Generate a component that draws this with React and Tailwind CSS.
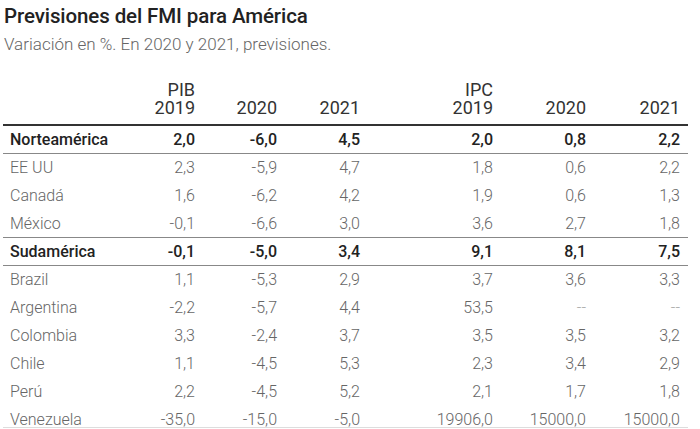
import React from "react";

const rows = [
  { name: "Norteamérica", v: ["2,0", "-6,0", "4,5", "2,0", "0,8", "2,2"], group: true },
  { name: "EE UU", v: ["2,3", "-5,9", "4,7", "1,8", "0,6", "2,2"] },
  { name: "Canadá", v: ["1,6", "-6,2", "4,2", "1,9", "0,6", "1,3"] },
  { name: "México", v: ["-0,1", "-6,6", "3,0", "3,6", "2,7", "1,8"], last: true },
  { name: "Sudamérica", v: ["-0,1", "-5,0", "3,4", "9,1", "8,1", "7,5"], group: true },
  { name: "Brazil", v: ["1,1", "-5,3", "2,9", "3,7", "3,6", "3,3"] },
  { name: "Argentina", v: ["-2,2", "-5,7", "4,4", "53,5", "--", "--"] },
  { name: "Colombia", v: ["3,3", "-2,4", "3,7", "3,5", "3,5", "3,2"] },
  { name: "Chile", v: ["1,1", "-4,5", "5,3", "2,3", "3,4", "2,9"] },
  { name: "Perú", v: ["2,2", "-4,5", "5,2", "2,1", "1,7", "1,8"] },
  { name: "Venezuela", v: ["-35,0", "-15,0", "-5,0", "19906,0", "15000,0", "15000,0"] },
];

const cols = "grid grid-cols-[117px_83px_82px_83px_133px_93px_94px]";

export default function App() {
  return (
    <div className="w-[700px] h-[429px] overflow-hidden bg-white font-['Roboto',sans-serif]">
      <div className="pl-[4px] pt-[2px]">
        <h1 className="text-[20.5px] leading-[28px] font-medium text-[#222] tracking-[-0.1px]">
          Previsiones del FMI para América
        </h1>
        <p className="text-[17px] leading-[22px] font-light text-[#666] mt-[3px]">
          Variación en %. En 2020 y 2021, previsiones.
        </p>
      </div>
      <div className="ml-[3px] w-[685px] mt-[26px] h-[347px] overflow-hidden border-b border-[#ddd]">
        <div className={`${cols} border-b-2 border-[#333] text-[18px] leading-[18px] text-[#333] pb-[7px]`}>
          <div />
          <div className="text-right pr-[8px]">PIB<br />2019</div>
          <div className="text-right pr-[8px] self-end">2020</div>
          <div className="text-right pr-[8px] self-end">2021</div>
          <div className="text-right pr-[8px]">IPC<br />2019</div>
          <div className="text-right pr-[8px] self-end">2020</div>
          <div className="text-right pr-[8px] self-end">2021</div>
        </div>
        {rows.map((r) => (
          <div
            key={r.name}
            className={`${cols} items-center text-[16px] ${
              r.group
                ? "h-[28px] font-medium text-[#222] border-b border-[#888]"
                : r.last
                ? "h-[28px] font-light text-[#666] border-b border-[#888]"
                : "h-[28px] font-light text-[#666]"
            }`}
          >
            <div className="pl-[7px] whitespace-nowrap">{r.name}</div>
            {r.v.map((x, i) => (
              <div key={i} className={`text-right pr-[8px] ${x === "--" ? "text-[#aaa]" : ""}`}>
                {x}
              </div>
            ))}
          </div>
        ))}
      </div>
    </div>
  );
}
